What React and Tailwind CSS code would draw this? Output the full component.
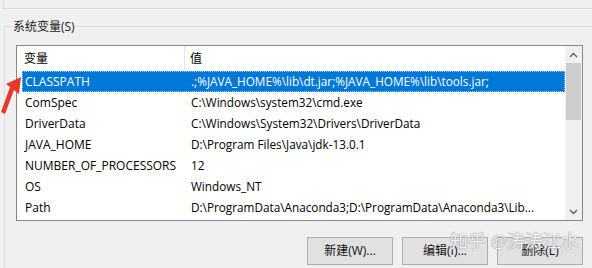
const rows = [
  ['CLASSPATH', '.;%JAVA_HOME%\\lib\\dt.jar;%JAVA_HOME%\\lib\\tools.jar;'],
  ['ComSpec', 'C:\\Windows\\system32\\cmd.exe'],
  ['DriverData', 'C:\\Windows\\System32\\Drivers\\DriverData'],
  ['JAVA_HOME', 'D:\\Program Files\\Java\\jdk-13.0.1'],
  ['NUMBER_OF_PROCESSORS', '12'],
  ['OS', 'Windows_NT'],
  ['Path', 'D:\\ProgramData\\Anaconda3;D:\\ProgramData\\Anaconda3\\Lib...'],
]

const font = { fontFamily: '"Open Sans", "Noto Sans CJK SC", sans-serif' }

function Button({ children }) {
  return (
    <div className="w-[86px] h-[28px] bg-[#e1e1e1] border border-[#adadad] flex items-center justify-center text-[12px] text-[#111]">
      {children}
    </div>
  )
}

export default function App() {
  return (
    <div className="w-[592px] h-[268px] bg-[#f0f0f0] relative overflow-hidden text-[12px] text-black" style={font}>
      <div className="ml-[3px] h-[9px] border-l border-b border-[#dcdcdc]" />

      <div className="relative mt-[17px] ml-[4px] border-l border-t border-[#dcdcdc] h-[260px] pt-[18px] pl-[11px]">
        <div className="absolute -top-[9px] left-[7px] px-[1px] bg-[#f0f0f0] text-[12px] leading-[18px] text-[#222]">系统变量(S)</div>

        <div className="w-[567px] h-[176px] border border-[#828790] bg-white flex">
          <div className="flex-1 flex flex-col">
            <div className="h-[25px] flex items-center">
              <div className="w-[168px] h-full border-r border-[#e5e5e5] pl-[7px] flex items-center">变量</div>
              <div className="pl-[5px]">值</div>
            </div>
            {rows.map(([name, value], i) => (
              <div
                key={name}
                className={`ml-[5px] h-[21px] flex items-center whitespace-nowrap ${
                  i === 0 ? 'bg-[#0078d7] text-white border border-dotted border-[#9ccbf2]' : 'border border-transparent'
                }`}
              >
                <div className="w-[165px] pl-[2px]">{name}</div>
                <div className="pl-[3px] text-[11.75px]">{value}</div>
              </div>
            ))}
          </div>

          <div className="w-[17px] bg-[#f0f0f0] flex flex-col">
            <div className="h-[17px] flex items-center justify-center">
              <svg width="9" height="6" viewBox="0 0 9 6">
                <path d="M1 5 L4.5 1.5 L8 5" fill="none" stroke="#606060" strokeWidth="1.4" />
              </svg>
            </div>
            <div className="h-[57px] mx-[1px] bg-[#cdcdcd]" />
            <div className="flex-1" />
            <div className="h-[17px] flex items-center justify-center">
              <svg width="9" height="6" viewBox="0 0 9 6">
                <path d="M1 1 L4.5 4.5 L8 1" fill="none" stroke="#606060" strokeWidth="1.4" />
              </svg>
            </div>
          </div>
        </div>

        <div className="mt-[16px] flex gap-[9px] pl-[291px]">
          <Button>新建(W)...</Button>
          <Button>编辑(I)...</Button>
          <Button>删除(L)</Button>
        </div>
      </div>

      <svg className="absolute left-0 top-[74px]" width="24" height="44" viewBox="0 0 24 44">
        <polygon points="21,3 19,20 14,16 5,40 1,38 10,13 6,10" fill="#e8372b" />
      </svg>

      <div
        className="absolute left-[450px] top-[229px] text-[18px] leading-[24px] text-white/90 whitespace-nowrap"
        style={{ textShadow: '0 0 1px #8a8a8a, 0 0 1px #8a8a8a' }}
      >
        知乎 @涛涛江水
      </div>
    </div>
  )
}
